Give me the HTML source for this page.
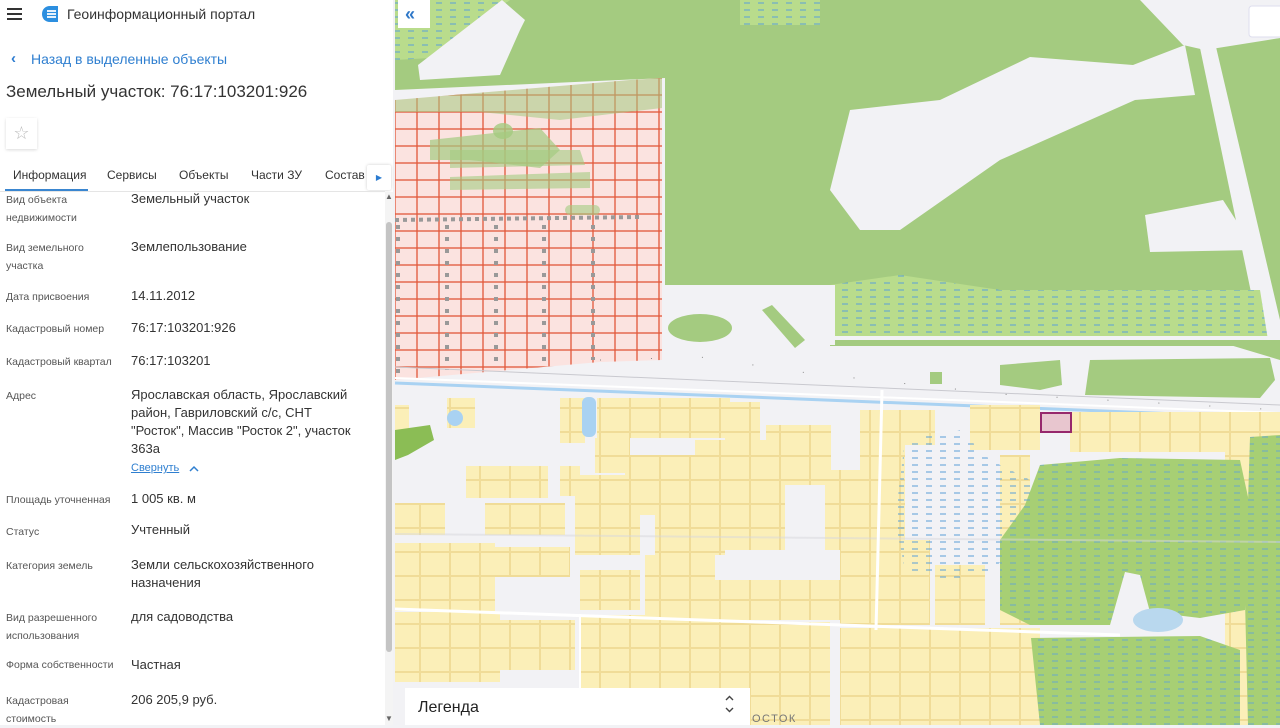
<!DOCTYPE html>
<html><head><meta charset="utf-8"><style>
*{margin:0;padding:0;box-sizing:border-box}
body{width:1280px;height:725px;overflow:hidden;position:relative;font-family:"Liberation Sans",sans-serif;background:#f2f2f5}
#map{position:absolute;left:0;top:0}
#panel{position:absolute;left:0;top:0;width:393px;height:725px;background:#fff;color:#333}
.a{position:absolute;white-space:nowrap}
.l{position:absolute;left:6px;font-size:10.5px;color:#555;line-height:18px}
.v{position:absolute;left:131px;font-size:13px;color:#333;line-height:18px}
</style></head><body>
<svg id="map" width="1280" height="725" viewBox="0 0 1280 725">
<defs>
<pattern id="dash" width="14" height="7" patternUnits="userSpaceOnUse"><rect width="14" height="7" fill="#b9dc8c"/><line x1="2" y1="3" x2="8" y2="3" stroke="#5a9fd8" stroke-width="1"/></pattern>
<pattern id="dashw" width="14" height="7" patternUnits="userSpaceOnUse"><line x1="2" y1="3" x2="8" y2="3" stroke="#5a9fd8" stroke-width="1"/></pattern>
<pattern id="dashg" width="14" height="7" patternUnits="userSpaceOnUse"><rect width="14" height="7" fill="#a7cf74"/><line x1="2" y1="3" x2="8" y2="3" stroke="#6aa8c8" stroke-width="1"/></pattern>
<pattern id="pink" x="395" y="78" width="22" height="17" patternUnits="userSpaceOnUse"><rect width="22" height="17" fill="#fbe3e0" stroke="#e2583a" stroke-width="1.3"/></pattern>
<pattern id="yel" x="0" y="0" width="30" height="24" patternUnits="userSpaceOnUse"><rect x="0.5" y="0.5" width="29" height="23" fill="#fbefb8" stroke="#f0dc98" stroke-width="1"/></pattern>
</defs>
<rect x="395" width="885" height="725" fill="#f2f2f5"/>
<polygon points="395,0 1185,0 1185,45 1280,38 1280,360 1180,330 830,330 830,290 665,290 665,78 395,90" fill="#a4cb80"/>
<polygon points="395,0 510,0 430,58 395,60" fill="url(#dash)"/>
<polygon points="740,0 820,0 820,25 740,25" fill="url(#dash)"/>
<polygon points="502,0 525,20 520,30 500,75 420,80 418,65" fill="#f2f2f5"/>
<polygon points="1140,0 1280,0 1280,38 1205,50 1183,45" fill="#f2f2f5"/>
<polygon points="830,190 850,110 940,100 1030,57 1133,65 1185,45 1195,95 1135,100 1000,160 900,230 860,230" fill="#f2f2f5"/>
<polygon points="1145,215 1223,200 1255,250 1150,252" fill="#f2f2f5"/>
<polygon points="1190,0 1205,0 1280,320 1280,345 1262,345" fill="#f2f2f5"/>
<polygon points="830,285 900,275 1000,290 1260,290 1268,340 830,340" fill="url(#dash)"/>
<rect x="830" y="336" width="450" height="10" fill="#f2f2f5"/>
<rect x="830" y="340" width="450" height="6" fill="#a4cb80"/>
<rect x="665" y="285" width="170" height="60" fill="#f2f2f5"/>
<ellipse cx="700" cy="328" rx="32" ry="14" fill="#a4cb80"/>
<polygon points="762,310 772,305 805,340 795,348" fill="#a4cb80"/>
<polygon points="1000,365 1060,360 1062,385 1040,390 1000,385" fill="#a4cb80"/>
<polygon points="1090,360 1270,358 1275,380 1260,398 1085,395" fill="#a4cb80"/>
<rect x="930" y="372" width="12" height="12" fill="#a4cb80"/>
<polygon points="395,100 630,80 662,78 662,360 600,362 395,380" fill="url(#pink)"/>
<polygon points="395,100 630,80 662,78 662,108 560,120 480,112 395,112" fill="#a4cb80" opacity=".55"/>
<polygon points="430,140 540,128 560,150 540,168 470,160 430,160" fill="#a4cb80" opacity=".7"/>
<polygon points="450,150 580,150 585,165 450,168" fill="#a4cb80" opacity=".6"/>
<polygon points="450,177 590,172 590,188 450,190" fill="#a4cb80" opacity=".6"/>
<rect x="565" y="205" width="35" height="10" rx="5" fill="#a4cb80" opacity=".6"/>
<ellipse cx="503" cy="131" rx="10" ry="8" fill="#a4cb80" opacity=".8"/>
<line x1="395" y1="220" x2="640" y2="217" stroke="#999" stroke-width="4" stroke-dasharray="4 4"/>
<line x1="398" y1="225" x2="398" y2="375" stroke="#999" stroke-width="4" stroke-dasharray="4 8"/>
<line x1="447" y1="225" x2="447" y2="370" stroke="#999" stroke-width="4" stroke-dasharray="4 8"/>
<line x1="496" y1="225" x2="496" y2="365" stroke="#999" stroke-width="4" stroke-dasharray="4 8"/>
<line x1="544" y1="225" x2="544" y2="362" stroke="#999" stroke-width="4" stroke-dasharray="4 8"/>
<line x1="593" y1="225" x2="593" y2="360" stroke="#999" stroke-width="4" stroke-dasharray="4 8"/>
<line x1="395" y1="367" x2="1280" y2="405" stroke="#c9c9cf" stroke-width="1"/>
<polyline points="600,360 700,357 800,372 900,383 1000,394 1280,410" fill="none" stroke="#888" stroke-width="1" stroke-dasharray="1 50"/>
<line x1="395" y1="383" x2="1280" y2="418" stroke="#a9d2f2" stroke-width="3"/>
<line x1="395" y1="378" x2="1280" y2="413" stroke="#fff" stroke-width="2"/>
<g fill="url(#yel)">
<rect x="395" y="405" width="14" height="40"/>
<rect x="447" y="398" width="28" height="30"/>
<rect x="560" y="398" width="25" height="45"/>
<rect x="597" y="398" width="130" height="40"/>
<rect x="595" y="438" width="35" height="35"/>
<rect x="695" y="398" width="35" height="20"/>
<rect x="725" y="402" width="35" height="70"/>
<rect x="766" y="425" width="65" height="60"/>
<rect x="860" y="410" width="75" height="35"/>
<rect x="970" y="405" width="70" height="45"/>
<rect x="1070" y="412" width="210" height="40"/>
<rect x="860" y="445" width="45" height="40"/>
<rect x="466" y="466" width="82" height="32"/>
<rect x="560" y="466" width="20" height="30"/>
<rect x="575" y="475" width="65" height="80"/>
<rect x="625" y="455" width="65" height="60"/>
<rect x="485" y="503" width="80" height="32"/>
<rect x="395" y="503" width="50" height="32"/>
<rect x="655" y="455" width="70" height="100"/>
<rect x="695" y="440" width="90" height="110"/>
<rect x="825" y="470" width="80" height="80"/>
<rect x="395" y="543" width="100" height="68"/>
<rect x="495" y="547" width="75" height="30"/>
<rect x="580" y="570" width="60" height="40"/>
<rect x="645" y="555" width="70" height="70"/>
<rect x="680" y="580" width="190" height="40"/>
<rect x="840" y="540" width="90" height="85"/>
<rect x="935" y="565" width="50" height="60"/>
<rect x="395" y="612" width="105" height="70"/>
<rect x="455" y="620" width="120" height="50"/>
<rect x="580" y="615" width="120" height="105"/>
<rect x="700" y="622" width="130" height="103"/>
<rect x="840" y="628" width="200" height="97"/>
<rect x="1000" y="455" width="30" height="170"/>
<rect x="1225" y="440" width="55" height="285"/>
</g>
<rect x="582" y="397" width="14" height="40" rx="6" fill="#a9d2f2"/>
<circle cx="455" cy="418" r="8" fill="#a9d2f2"/>
<polygon points="395,430 430,425 434,440 408,455 395,460" fill="#8bbd55"/>
<rect x="1041" y="413" width="30" height="19" fill="#e8c6cf" stroke="#96286c" stroke-width="2"/>
<polygon points="905,440 960,430 990,460 1030,480 1030,540 990,570 950,580 905,570 895,520" fill="url(#dashw)"/>
<polygon points="1040,465 1120,458 1240,460 1253,520 1245,610 1200,618 1150,612 1140,575 1125,572 1110,625 1030,625 1000,610 1000,540 1025,505" fill="url(#dashg)"/>
<ellipse cx="1158" cy="620" rx="25" ry="12" fill="#b9d8ee"/>
<polygon points="1031,638 1200,636 1240,650 1240,725 1040,725" fill="url(#dashg)"/>
<polygon points="1250,437 1280,435 1280,725 1248,725 1245,600" fill="url(#dashg)"/>
<line x1="395" y1="534" x2="1280" y2="542" stroke="#d8d8dc" stroke-width="2" opacity=".5"/>
<line x1="395" y1="609" x2="1120" y2="635" stroke="#fff" stroke-width="3"/>
<line x1="882" y1="390" x2="876" y2="630" stroke="#fff" stroke-width="3"/>
<line x1="580" y1="614" x2="580" y2="725" stroke="#fff" stroke-width="2"/>
<rect x="398" y="0" width="32" height="28" fill="#fff"/>
<text x="405" y="20" font-family="Liberation Sans" font-size="18" fill="#2f78c8" font-weight="bold">«</text>
<rect x="1249" y="6" width="35" height="31" rx="3" fill="#fff" stroke="#dde" stroke-width="1"/>
<rect x="405" y="688" width="345" height="37" fill="#fff"/>
<text x="418" y="712" font-family="Liberation Sans" font-size="16" fill="#222">Легенда</text>
<path d="M726,708 l3.5,3.5 l3.5,-3.5 M726,700 l3.5,-3.5 l3.5,3.5" stroke="#444" stroke-width="1.4" fill="none"/>
<text x="752" y="722" font-family="Liberation Sans" font-size="11" fill="#777" letter-spacing="1.5">ОСТОК</text>
</svg>
<div id="panel">
<div class="a" style="left:7px;top:8px;width:15px;height:12px;border-top:2px solid #333;border-bottom:2px solid #333"><div style="margin-top:3px;border-top:2px solid #333"></div></div>
<svg class="a" style="left:41px;top:5px" width="18" height="18" viewBox="0 0 18 18"><path d="M9,1 C4,1 1,4.5 1,9 C1,13.5 4,17 9,17 L17,17 L17,1 Z" fill="#2c8fe0"/><path d="M6,6 H15 M6,9 H15 M6,12 H15" stroke="#fff" stroke-width="1.8"/></svg>
<div class="a" style="left:67px;top:6px;font-size:14px;color:#333">Геоинформационный портал</div>
<div class="a" style="left:11px;top:50px;font-size:15px;color:#2b7bd0;font-weight:bold">‹</div>
<div class="a" style="left:31px;top:51px;font-size:14px;color:#2f7fd0">Назад в выделенные объекты</div>
<div class="a" style="left:6px;top:82px;font-size:17px;color:#333">Земельный участок: 76:17:103201:926</div>
<div class="a" style="left:6px;top:118px;width:31px;height:31px;box-shadow:0 1px 3px rgba(0,0,0,.15);background:#fff;text-align:center;font-size:18px;line-height:30px;color:#bbb">☆</div>
<div class="a" style="left:13px;top:168px;font-size:12px;color:#333">Информация</div>
<div class="a" style="left:107px;top:168px;font-size:12px;color:#333">Сервисы</div>
<div class="a" style="left:179px;top:168px;font-size:12px;color:#333">Объекты</div>
<div class="a" style="left:251px;top:168px;font-size:12px;color:#333">Части ЗУ</div>
<div class="a" style="left:325px;top:168px;font-size:12px;color:#333">Состав</div>
<div class="a" style="left:367px;top:165px;width:24px;height:25px;background:#fff;box-shadow:0 0 3px rgba(0,0,0,.2);border-radius:2px;color:#2b7bd0;font-size:8px;text-align:center;line-height:25px">▶</div>
<div class="a" style="left:5px;top:189px;width:83px;height:2px;background:#3a86d0"></div>
<div class="a" style="left:0;top:191px;width:385px;height:1px;background:#e5e5e5"></div>
<div class="a" style="left:385px;top:192px;width:8px;height:533px;background:#f4f4f4"></div>
<div class="a" style="left:386px;top:222px;width:6px;height:430px;background:#c4c4c4;border-radius:3px"></div>
<div class="a" style="left:385px;top:192px;font-size:8px;color:#666">▲</div>
<div class="a" style="left:385px;top:714px;font-size:8px;color:#666">▼</div>
<div class="l" style="top:191px">Вид объекта<br>недвижимости</div><div class="v" style="top:190px">Земельный участок</div>
<div class="l" style="top:239px">Вид земельного<br>участка</div><div class="v" style="top:238px">Землепользование</div>
<div class="l" style="top:288px">Дата присвоения</div><div class="v" style="top:287px">14.11.2012</div>
<div class="l" style="top:320px">Кадастровый номер</div><div class="v" style="top:319px">76:17:103201:926</div>
<div class="l" style="top:353px">Кадастровый квартал</div><div class="v" style="top:352px">76:17:103201</div>
<div class="l" style="top:387px">Адрес</div><div class="v" style="top:386px">Ярославская область, Ярославский<br>район, Гавриловский с/с, СНТ<br>"Росток", Массив "Росток 2", участок<br>363а</div>
<div class="a" style="left:131px;top:462px;font-size:11px;color:#2f7fd0;text-decoration:underline">Свернуть</div>
<svg class="a" style="left:189px;top:465px" width="10" height="8"><path d="M1,6 L5,2 L9,6" stroke="#2f7fd0" stroke-width="1.5" fill="none"/></svg>
<div class="l" style="top:491px">Площадь уточненная</div><div class="v" style="top:490px">1 005 кв. м</div>
<div class="l" style="top:523px">Статус</div><div class="v" style="top:521px">Учтенный</div>
<div class="l" style="top:557px">Категория земель</div><div class="v" style="top:556px">Земли сельскохозяйственного<br>назначения</div>
<div class="l" style="top:609px">Вид разрешенного<br>использования</div><div class="v" style="top:608px">для садоводства</div>
<div class="l" style="top:656px">Форма собственности</div><div class="v" style="top:656px">Частная</div>
<div class="l" style="top:692px">Кадастровая<br>стоимость</div><div class="v" style="top:691px">206 205,9 руб.</div>
</div>
</body></html>
